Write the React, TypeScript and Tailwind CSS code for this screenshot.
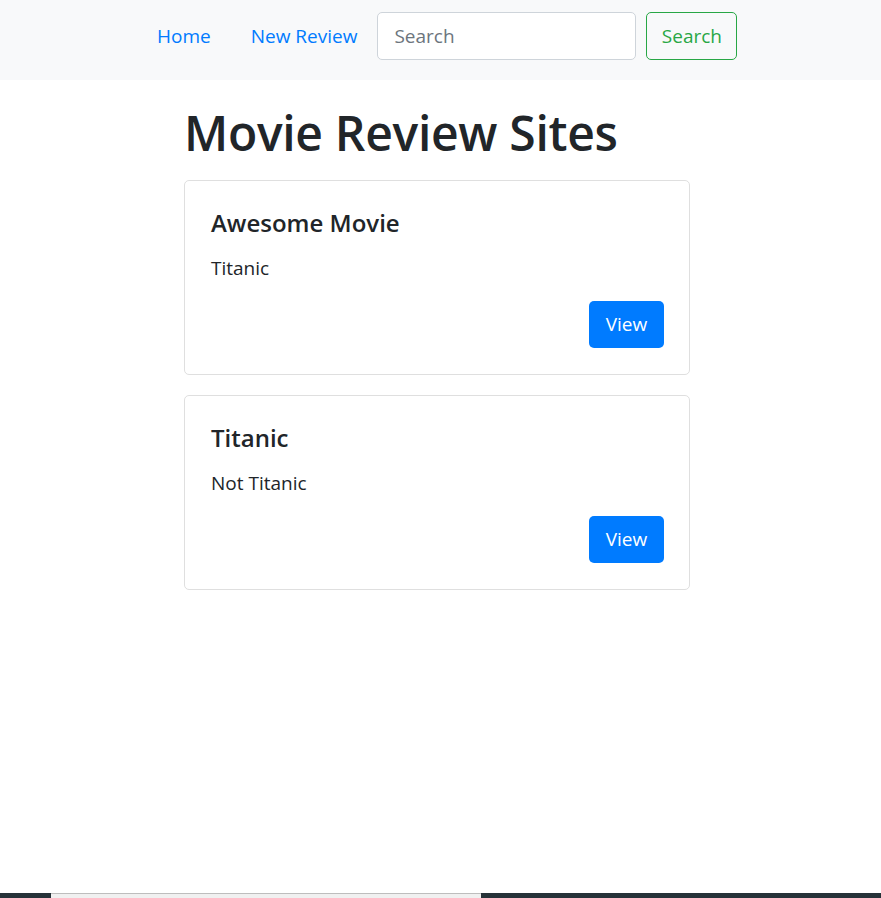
export default function App() {
  const font = { fontFamily: '"Open Sans", "Noto Sans", Arial, sans-serif' };
  const cards = [
    { title: "Awesome Movie", text: "Titanic" },
    { title: "Titanic", text: "Not Titanic" },
  ];
  return (
    <div className="min-h-[898px] bg-white text-[#212529] relative" style={font}>
      <nav className="h-[80px] bg-[#f8f9fa] flex items-start pt-[12px] pl-[137px]">
        <div className="flex items-center h-[48px]">
          <a className="px-[20px] text-[19px] text-[#007bff] leading-[31px]">Home</a>
          <a className="px-[20px] text-[19px] text-[#007bff] leading-[31px]">New Review</a>
          <div className="w-[259px] h-[48px] border border-[#ced4da] rounded-[5px] bg-white flex items-center pl-[16px] text-[19px] text-[#6c757d]">
            Search
          </div>
          <button className="ml-[10px] w-[91px] h-[48px] border border-solid border-[#28a745] rounded-[5px] text-[#28a745] text-[19px] flex items-center justify-center">
            Search
          </button>
        </div>
      </nav>
      <main className="w-[506px] ml-[184px] pt-[22px]">
        <h1 className="text-[48px] font-semibold leading-[62px] mb-[16px] tracking-[-0.3px]">Movie Review Sites</h1>
        <div className="flex flex-col gap-[20px]">
          {cards.map((c) => (
            <div key={c.title} className="h-[195px] border border-[#dfdfdf] rounded-[5px] px-[25px] pt-[26px] flex flex-col">
              <h5 className="pl-[1px] text-[24px] font-semibold leading-[31px] mb-[15px]">{c.title}</h5>
              <p className="pl-[1px] text-[19px] leading-[31px]">{c.text}</p>
              <div className="flex justify-end mt-[17px]">
                <button className="w-[75px] h-[47px] bg-[#007bff] text-white rounded-[5px] text-[19px] flex items-center justify-center">
                  View
                </button>
              </div>
            </div>
          ))}
        </div>
      </main>
      <div className="absolute left-0 right-0 bottom-0 h-[5px] bg-[#263238]">
        <div className="ml-[51px] w-[430px] h-[5px] bg-[#f0f0f0] border-t border-[#bdbdbd]" />
      </div>
    </div>
  );
}
